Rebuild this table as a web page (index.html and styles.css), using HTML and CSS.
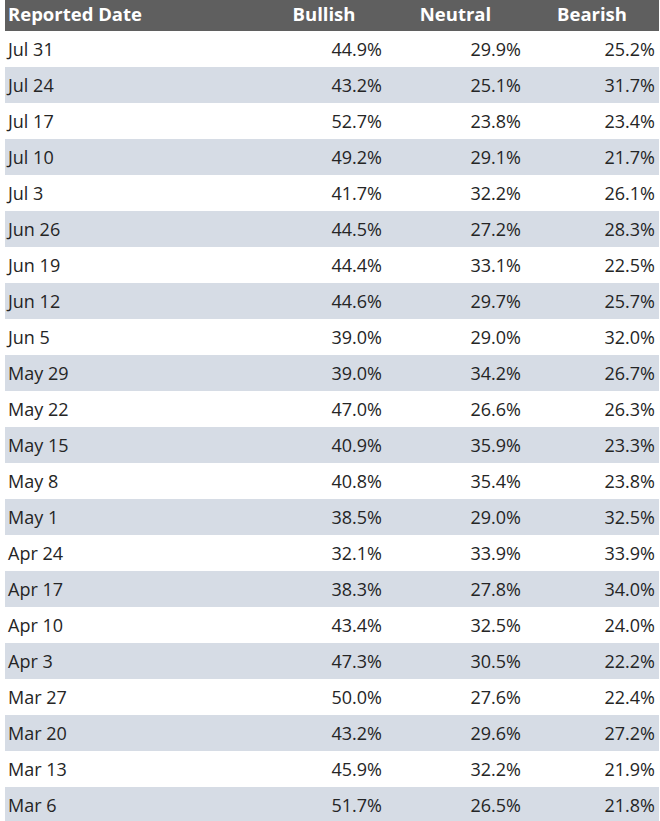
FILE: index.html
```html
<!DOCTYPE html>
<html>
<head>
<meta charset="utf-8">
<link rel="stylesheet" href="styles.css">
</head>
<body>
<table class="sentiment">
  <colgroup>
    <col class="c-date"><col class="c-bull"><col class="c-neut"><col class="c-bear">
  </colgroup>
  <thead>
    <tr><th class="h-date">Reported Date</th><th>Bullish</th><th>Neutral</th><th>Bearish</th></tr>
  </thead>
  <tbody>
    <tr><td>Jul 31</td><td>44.9%</td><td>29.9%</td><td>25.2%</td></tr>
    <tr><td>Jul 24</td><td>43.2%</td><td>25.1%</td><td>31.7%</td></tr>
    <tr><td>Jul 17</td><td>52.7%</td><td>23.8%</td><td>23.4%</td></tr>
    <tr><td>Jul 10</td><td>49.2%</td><td>29.1%</td><td>21.7%</td></tr>
    <tr><td>Jul 3</td><td>41.7%</td><td>32.2%</td><td>26.1%</td></tr>
    <tr><td>Jun 26</td><td>44.5%</td><td>27.2%</td><td>28.3%</td></tr>
    <tr><td>Jun 19</td><td>44.4%</td><td>33.1%</td><td>22.5%</td></tr>
    <tr><td>Jun 12</td><td>44.6%</td><td>29.7%</td><td>25.7%</td></tr>
    <tr><td>Jun 5</td><td>39.0%</td><td>29.0%</td><td>32.0%</td></tr>
    <tr><td>May 29</td><td>39.0%</td><td>34.2%</td><td>26.7%</td></tr>
    <tr><td>May 22</td><td>47.0%</td><td>26.6%</td><td>26.3%</td></tr>
    <tr><td>May 15</td><td>40.9%</td><td>35.9%</td><td>23.3%</td></tr>
    <tr><td>May 8</td><td>40.8%</td><td>35.4%</td><td>23.8%</td></tr>
    <tr><td>May 1</td><td>38.5%</td><td>29.0%</td><td>32.5%</td></tr>
    <tr><td>Apr 24</td><td>32.1%</td><td>33.9%</td><td>33.9%</td></tr>
    <tr><td>Apr 17</td><td>38.3%</td><td>27.8%</td><td>34.0%</td></tr>
    <tr><td>Apr 10</td><td>43.4%</td><td>32.5%</td><td>24.0%</td></tr>
    <tr><td>Apr 3</td><td>47.3%</td><td>30.5%</td><td>22.2%</td></tr>
    <tr><td>Mar 27</td><td>50.0%</td><td>27.6%</td><td>22.4%</td></tr>
    <tr><td>Mar 20</td><td>43.2%</td><td>29.6%</td><td>27.2%</td></tr>
    <tr><td>Mar 13</td><td>45.9%</td><td>32.2%</td><td>21.9%</td></tr>
    <tr><td>Mar 6</td><td>51.7%</td><td>26.5%</td><td>21.8%</td></tr>
  </tbody>
</table>
</body>
</html>
```
FILE: styles.css
```css
html, body {
  margin: 0;
  padding: 0;
  background: #ffffff;
}
body {
  padding-left: 5px;
  font-family: "Open Sans", "Noto Sans", sans-serif;
}
.sentiment {
  width: 654px;
  border-collapse: collapse;
  table-layout: fixed;
  color: #252525;
  font-size: 18px;
}
.c-date { width: 257px; }
.c-bull { width: 124px; }
.c-neut { width: 139px; }
.c-bear { width: 134px; }
.sentiment thead th {
  background: #5f5f5f;
  color: #ffffff;
  font-weight: 700;
  height: 31px;
  padding: 0 0 4px 0;
  box-sizing: border-box;
  text-align: center;
  font-size: 18.5px;
  line-height: 27px;
  vertical-align: middle;
}
.sentiment thead th.h-date {
  text-align: left;
  padding-left: 3px;
}
.sentiment tbody td {
  height: 36px;
  padding: 0 4px 0 0;
  text-align: right;
  line-height: 36px;
}
.sentiment tbody td:first-child {
  text-align: left;
  padding-left: 3px;
}
.sentiment tbody tr:nth-child(even) td {
  background: #d6dce5;
}
```
